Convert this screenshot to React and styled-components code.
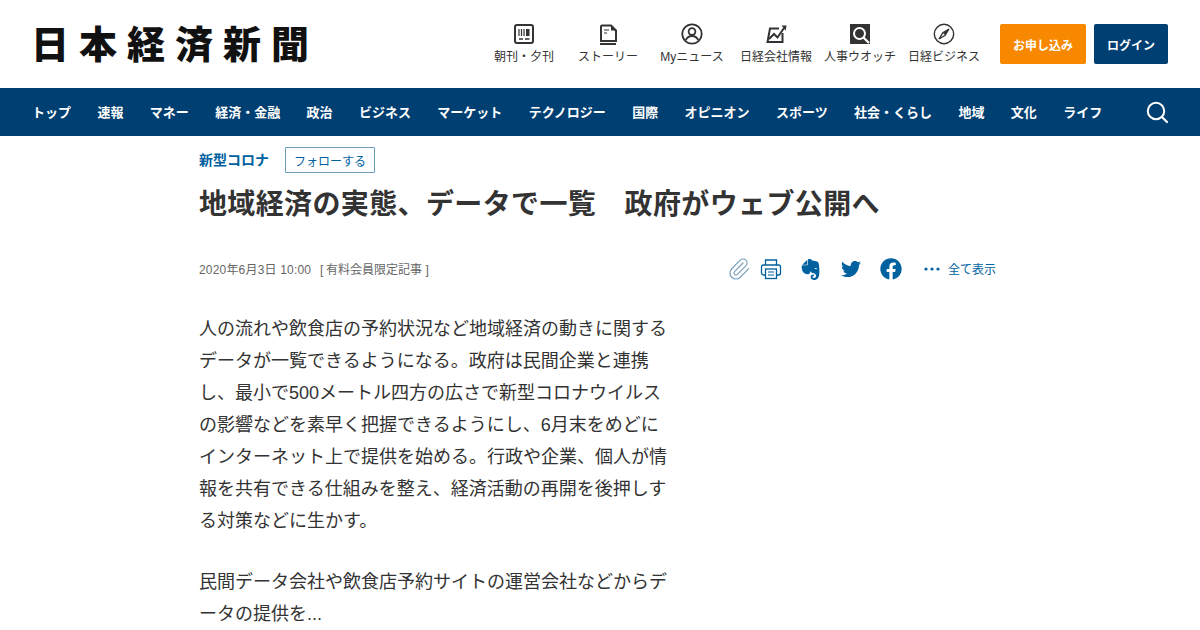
import React from "react";
import styled, { createGlobalStyle } from "styled-components";
import { FaFacebook, FaTwitter } from "react-icons/fa";
import { SiEvernote } from "react-icons/si";
import { Paperclip } from "lucide-react";

const Global = createGlobalStyle`
  html, body { margin: 0; padding: 0; background: #fff; height: 630px; overflow: hidden; }
  body { font-family: "Liberation Sans", "Noto Sans CJK JP", sans-serif; color: #333; }
`;

const navy = "#003f72";
const blue = "#00619f";

const TopBar = styled.header`
  height: 88px;
  display: flex;
  align-items: flex-start;
  justify-content: space-between;
  padding: 0 32px 0 31px;
  box-sizing: border-box;
`;
const Logo = styled.a`
  display: block;
  margin-top: 20px;
  font-family: "Noto Sans CJK JP", sans-serif;
  font-weight: 900;
  font-size: 38px;
  line-height: 44px;
  letter-spacing: 10px;
  color: #111;
  white-space: nowrap;
`;
const RightSide = styled.div`
  display: flex;
  align-items: flex-start;
`;
const Utils = styled.nav`
  display: flex;
  margin-top: 23px;
  margin-right: 14px;
`;
const Util = styled.a`
  width: 84px;
  display: flex;
  flex-direction: column;
  align-items: center;
  font-size: 12px;
  line-height: 18px;
  color: #333;
  white-space: nowrap;
`;
const UtilIcon = styled.svg`
  width: 22px;
  height: 22px;
  display: block;
  margin-bottom: 3px;
`;
const CTA = styled.a`
  margin-top: 24px;
  height: 40px;
  width: ${(p) => p.$w}px;
  margin-left: ${(p) => p.$ml || 0}px;
  background: ${(p) => p.$bg};
  border-radius: 2px;
  color: #fff;
  font-size: 12px;
  font-weight: 700;
  display: flex;
  align-items: center;
  justify-content: center;
`;
const NavBar = styled.nav`
  height: 48px;
  background: ${navy};
  display: flex;
  align-items: center;
  padding: 0 31px 0 32px;
  gap: 26.36px;
`;
const NavItem = styled.a`
  color: #fff;
  font-size: 13px;
  font-weight: 700;
  white-space: nowrap;
  padding-bottom: 2px;
`;
const NavSearch = styled.svg`
  width: 24px;
  height: 24px;
  margin-left: auto;
`;
const Article = styled.main`
  margin-left: 199px;
  width: 797px;
`;
const TopicRow = styled.div`
  display: flex;
  align-items: center;
  gap: 16px;
  margin-top: 11px;
`;
const Topic = styled.a`
  font-size: 14px;
  font-weight: 700;
  color: ${blue};
  padding-bottom: 2px;
`;
const Follow = styled.a`
  box-sizing: border-box;
  width: 90px;
  height: 26px;
  border: 1px solid #6f9dbc;
  border-radius: 1px;
  color: ${blue};
  font-size: 12px;
  display: flex;
  align-items: center;
  justify-content: center;
`;
const Title = styled.h1`
  margin: 11px 0 0;
  font-size: 28px;
  line-height: 42px;
  font-weight: 700;
  letter-spacing: 0.37px;
  color: #333;
  white-space: nowrap;
`;
const MetaRow = styled.div`
  margin-top: 30px;
  height: 26px;
  display: flex;
  align-items: center;
  justify-content: space-between;
`;
const Meta = styled.div`
  font-size: 12px;
  color: #666;
  display: flex;
  gap: 9px;
  padding-bottom: 2px;
`;
const DateText = styled.span`
  letter-spacing: 0.18px;
`;
const Bracket = styled.span`
  display: inline-block;
  width: 6px;
`;
const Share = styled.div`
  display: flex;
  align-items: center;
  color: ${blue};
`;
const ShareCell = styled.span`
  width: ${(p) => p.$w || 40}px;
  display: flex;
  justify-content: ${(p) => p.$justify || "center"};
  align-items: center;
  color: ${(p) => p.$c || blue};
`;
const ShowAll = styled.a`
  font-size: 12px;
  color: ${blue};
  margin-left: -4px;
  padding-bottom: 2px;
`;
const Body = styled.div`
  margin-top: 31px;
  width: 470px;
  font-size: 18px;
  line-height: 32px;
  color: #333;
`;
const Para = styled.p`
  margin: 0 0 29px;
`;

const I = { fill: "none", stroke: "#333", strokeWidth: 2 };
const icons = [
  <>
    <rect x="2" y="2" width="18" height="18" rx="2" {...I} />
    <path d="M6 6v7M8.5 6v7M11 6v7" stroke="#333" strokeWidth="1.2" />
    <rect x="13" y="6" width="3.5" height="7" fill="#333" />
    <path d="M6 16h4M12 16h4.5" stroke="#333" strokeWidth="1.4" />
  </>,
  <>
    <path d="M4 18V3.5A1 1 0 0 1 5 2.5h9l5 5V18z" {...I} />
    <path d="M3 21h16" {...I} />
    <path d="M7 7h5M7 10h3" stroke="#333" strokeWidth="1.2" />
    <path d="M14 2.5l5 5h-5z" fill="#333" />
  </>,
  <>
    <circle cx="11" cy="11" r="9.7" fill="none" stroke="#333" strokeWidth="1.8" />
    <circle cx="11" cy="8.6" r="3.4" fill="none" stroke="#333" strokeWidth="1.8" />
    <path d="M4.8 17.2c1.2-3 3.6-4.2 6.2-4.2s5 1.2 6.2 4.2" fill="none" stroke="#333" strokeWidth="1.8" />
  </>,
  <>
    <path d="M17.5 10v9H2.5L5 5.5h9" {...I} />
    <path d="M4 16l5-5 3.5 3.5L19 5" {...I} />
    <path d="M16.5 2.5h5l-.8 5.2z" fill="#333" />
  </>,
  <>
    <rect x="1" y="1" width="20" height="20" fill="#333" />
    <circle cx="10.5" cy="10.5" r="5.5" fill="none" stroke="#fff" strokeWidth="2" />
    <path d="M14.5 14.5l5.5 5.5" stroke="#fff" strokeWidth="2.2" />
  </>,
  <>
    <circle cx="11" cy="11" r="9.7" fill="none" stroke="#333" strokeWidth="1.4" />
    <path d="M16 6l-3.8 6.2L6 16l3.8-6.2z" fill="none" stroke="#333" strokeWidth="1.3" />
    <path d="M16 6l-3.8 6.2-2.4-2.4z" fill="#333" />
  </>,
];
const utils = ["朝刊・夕刊", "ストーリー", "Myニュース", "日経会社情報", "人事ウオッチ", "日経ビジネス"];
const navs = ["トップ", "速報", "マネー", "経済・金融", "政治", "ビジネス", "マーケット", "テクノロジー", "国際", "オピニオン", "スポーツ", "社会・くらし", "地域", "文化", "ライフ"];

export default function App() {
  return (
    <>
      <Global />
      <TopBar>
        <Logo>日本経済新聞</Logo>
        <RightSide>
          <Utils>
            {utils.map((u, i) => (
              <Util key={u}>
                <UtilIcon viewBox="0 0 22 22">{icons[i]}</UtilIcon>
                {u}
              </Util>
            ))}
          </Utils>
          <CTA $w={86} $bg="#f78800">お申し込み</CTA>
          <CTA $w={74} $ml={8} $bg={navy}>ログイン</CTA>
        </RightSide>
      </TopBar>
      <NavBar>
        {navs.map((n) => (
          <NavItem key={n}>{n}</NavItem>
        ))}
        <NavSearch viewBox="0 0 24 24">
          <circle cx="11" cy="11" r="8.2" fill="none" stroke="#fff" strokeWidth="2" />
          <path d="M17 17l5 5" stroke="#fff" strokeWidth="2.2" strokeLinecap="round" />
        </NavSearch>
      </NavBar>
      <Article>
        <TopicRow>
          <Topic>新型コロナ</Topic>
          <Follow>フォローする</Follow>
        </TopicRow>
        <Title>地域経済の実態、データで一覧　政府がウェブ公開へ</Title>
        <MetaRow>
          <Meta>
            <DateText>2020年6月3日 10:00</DateText>
            <span><Bracket>[</Bracket>有料会員限定記事<Bracket>&nbsp;]</Bracket></span>
          </Meta>
          <Share>
            <ShareCell $w={33} $c="#7ba3bd" $justify="flex-end">
              <Paperclip size={24} strokeWidth={1.2} />
            </ShareCell>
            <ShareCell $w={40}>
              <svg width="22" height="22" viewBox="0 0 22 22" fill="none" stroke="currentColor" strokeWidth="1.3">
                <path d="M5.5 7V2h11v5" />
                <rect x="1.5" y="7" width="19" height="10" rx="2" />
                <rect x="5.5" y="11" width="11" height="9.5" fill="#fff" />
                <path d="M8 14h6M8 17h6" strokeWidth="1.2" />
              </svg>
            </ShareCell>
            <ShareCell $w={40}><SiEvernote size={21} /></ShareCell>
            <ShareCell $w={40}><FaTwitter size={20} /></ShareCell>
            <ShareCell $w={41}><FaFacebook size={22} /></ShareCell>
            <ShareCell $w={40}>
              <svg width="16" height="4" viewBox="0 0 16 4" fill="currentColor">
                <circle cx="2" cy="2" r="1.6" /><circle cx="8" cy="2" r="1.6" /><circle cx="14" cy="2" r="1.6" />
              </svg>
            </ShareCell>
            <ShowAll>全て表示</ShowAll>
          </Share>
        </MetaRow>
        <Body>
          <Para>人の流れや飲食店の予約状況など地域経済の動きに関するデータが一覧できるようになる。政府は民間企業と連携し、最小で500メートル四方の広さで新型コロナウイルスの影響などを素早く把握できるようにし、6月末をめどにインターネット上で提供を始める。行政や企業、個人が情報を共有できる仕組みを整え、経済活動の再開を後押しする対策などに生かす。</Para>
          <Para>民間データ会社や飲食店予約サイトの運営会社などからデータの提供を...</Para>
        </Body>
      </Article>
    </>
  );
}
